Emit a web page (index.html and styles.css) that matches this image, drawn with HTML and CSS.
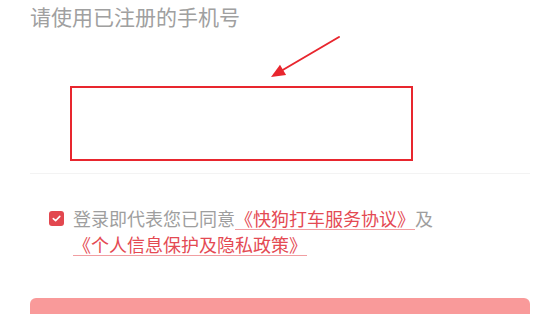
FILE: index.html
```html
<!DOCTYPE html>
<html lang="zh-CN">
<head>
<meta charset="utf-8">
<title>登录</title>
<link rel="stylesheet" href="styles.css">
</head>
<body>
<div class="page">
  <div class="title">请使用已注册的手机号</div>
  <div class="field"></div>
  <div class="agree">
    <span class="check">
      <svg width="15" height="15" viewBox="0 0 15 15"><path d="M4.3 7.6 L6.6 9.7 L10.8 5.4" fill="none" stroke="#fff" stroke-width="1.6" stroke-linecap="round" stroke-linejoin="round"/></svg>
    </span>
    <p class="agree-text">登录即代表您已同意<a class="link">《快狗打车服务协议》</a>及<br><a class="link">《个人信息保护及隐私政策》</a></p>
  </div>
  <div class="btn"></div>
</div>
<div class="mark-rect"></div>
<svg class="mark-arrow" width="554" height="100" viewBox="0 0 554 100">
  <line x1="339" y1="37" x2="281" y2="71" stroke="#e8262e" stroke-width="2" stroke-linecap="round"/>
  <polygon points="271,77 280,64.7 286.1,75.1" fill="#e8262e"/>
</svg>
</body>
</html>
```
FILE: styles.css
```css
html, body {
  margin: 0;
  padding: 0;
  background: #fff;
}
body {
  width: 554px;
  height: 314px;
  overflow: hidden;
  position: relative;
  font-family: "Noto Sans CJK SC", "Noto Sans", sans-serif;
}
.page {
  padding: 1px 24px 0 30px;
}
.title {
  font-size: 21px;
  line-height: 30px;
  color: #a0a0a0;
}
.field {
  height: 142px;
  border-bottom: 1px solid #f3f3f3;
}
.agree {
  display: flex;
  align-items: flex-start;
  margin-top: 31px;
  padding-left: 19px;
}
.check {
  width: 15px;
  height: 15px;
  border-radius: 3px;
  background: #e2474f;
  margin-top: 6px;
  margin-right: 9px;
  display: flex;
  flex-shrink: 0;
}
.agree-text {
  margin: 0;
  font-size: 18px;
  line-height: 26px;
  color: #9e9e9e;
}
.link {
  color: #e44a53;
  text-decoration: underline;
  text-decoration-color: #f19ea1;
  text-decoration-thickness: 1px;
  text-underline-offset: 3px;
}
.btn {
  margin-top: 41px;
  height: 16px;
  border-radius: 6px 6px 0 0;
  background: #f99a9a;
}
.mark-rect {
  position: absolute;
  left: 70px;
  top: 86px;
  width: 343px;
  height: 75px;
  box-sizing: border-box;
  border: 2px solid #e8262e;
}
.mark-arrow {
  position: absolute;
  left: 0;
  top: 0;
}
```
